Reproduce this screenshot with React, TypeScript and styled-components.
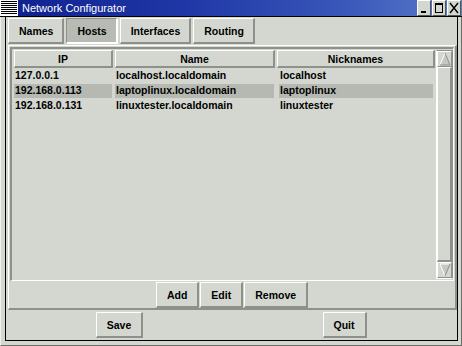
import React from "react";
import styled, { createGlobalStyle } from "styled-components";

const hosts = [
  { ip: "127.0.0.1", name: "localhost.localdomain", nick: "localhost" },
  { ip: "192.168.0.113", name: "laptoplinux.localdomain", nick: "laptoplinux", selected: true },
  { ip: "192.168.0.131", name: "linuxtester.localdomain", nick: "linuxtester" },
];

const tabs = ["Names", "Hosts", "Interfaces", "Routing"];

export default function App() {
  return (
    <>
      <GlobalStyle />
      <Window>
        <TitleBar>
          <MenuIcon width="18" height="16" viewBox="0 0 18 16">
            <rect x="0" y="0" width="18" height="16" fill="#fff" />
            {[1, 3, 5, 7, 9, 11, 13].map((y) => (
              <rect key={y} x="1" y={y} width="16" height="1" fill="#000" />
            ))}
          </MenuIcon>
          <Title>Network Configurator</Title>
          <WinButtons>
            <WinButton>
              <svg width="12" height="14" viewBox="0 0 12 14">
                <rect x="3" y="10" width="5" height="2" fill="#000" />
              </svg>
            </WinButton>
            <WinButton>
              <svg width="12" height="14" viewBox="0 0 12 14">
                <rect x="2.5" y="2.5" width="7" height="9" fill="none" stroke="#000" />
                <rect x="2" y="2" width="8" height="2" fill="#000" />
              </svg>
            </WinButton>
            <WinButton>
              <svg width="12" height="14" viewBox="0 0 12 14">
                <path d="M2 2 L10 12 M10 2 L2 12" stroke="#000" strokeWidth="1.4" />
              </svg>
            </WinButton>
          </WinButtons>
        </TitleBar>

        <Frame>
          <Client>
            <Tabs>
              {tabs.map((t) => (
                <Tab key={t} $active={t === "Hosts"}>{t}</Tab>
              ))}
            </Tabs>

            <Panel>
              <List>
                <Table>
                  <Header>
                    <HeaderCell>IP</HeaderCell>
                    <HeaderCell>Name</HeaderCell>
                    <HeaderCell>Nicknames</HeaderCell>
                  </Header>
                  {hosts.map((h) => (
                    <Row key={h.ip}>
                      <Cell $selected={h.selected}>{h.ip}</Cell>
                      <Cell $selected={h.selected}>{h.name}</Cell>
                      <Cell $selected={h.selected} $last>{h.nick}</Cell>
                    </Row>
                  ))}
                </Table>
                <Scrollbar>
                  <Arrow>
                    <svg width="12" height="14" viewBox="0 0 12 14">
                      <path d="M6 1 L11 13 L1 13 Z" fill="#c4c8c1" />
                      <path d="M6 1 L1 13" stroke="#fff" strokeWidth="1" />
                      <path d="M6 1 L11 13 L1 13" fill="none" stroke="#8e918b" strokeWidth="1" />
                    </svg>
                  </Arrow>
                  <Thumb />
                  <Arrow>
                    <svg width="12" height="14" viewBox="0 0 12 14">
                      <path d="M1 1 L11 1 L6 13 Z" fill="#c4c8c1" />
                      <path d="M1 1 L11 1 M1 1 L6 13" stroke="#fff" strokeWidth="1" />
                      <path d="M11 1 L6 13" stroke="#8e918b" strokeWidth="1" />
                    </svg>
                  </Arrow>
                </Scrollbar>
              </List>

              <Actions>
                <Button>Add</Button>
                <Button>Edit</Button>
                <Button>Remove</Button>
              </Actions>
            </Panel>

            <BottomBar>
              <Button>Save</Button>
              <Button>Quit</Button>
            </BottomBar>
          </Client>
        </Frame>
      </Window>
    </>
  );
}

const GlobalStyle = createGlobalStyle`
  html, body {
    margin: 0;
    padding: 0;
    background: #d4d7d0;
  }
  body {
    font-family: "Liberation Sans", Arial, sans-serif;
  }
  * {
    box-sizing: border-box;
  }
`;

const Window = styled.div`
  width: 462px;
  height: 346px;
  display: flex;
  flex-direction: column;
  background: #d4d7d0;
  overflow: hidden;
`;

const TitleBar = styled.div`
  height: 17px;
  flex: 0 0 17px;
  display: flex;
  align-items: flex-start;
  background: linear-gradient(90deg, #10208e 0%, #1f37a6 40%, #3a58ba 75%, #5a7bca 100%);
  border-bottom: 1px solid #000;
`;

const MenuIcon = styled.svg`
  display: block;
  flex: 0 0 18px;
`;

const Title = styled.div`
  flex: 1;
  color: #fff;
  font-size: 11px;
  line-height: 16px;
  margin-left: 4px;
  white-space: nowrap;
`;

const WinButtons = styled.div`
  display: flex;
  gap: 1px;
  margin-right: 1px;
`;

const WinButton = styled.div`
  width: 14px;
  height: 16px;
  display: flex;
  align-items: center;
  justify-content: center;
  background: #d4d7d0;
  border-top: 1px solid #fff;
  border-left: 1px solid #fff;
  border-right: 1px solid #55574f;
  border-bottom: 1px solid #55574f;
`;

const Frame = styled.div`
  flex: 1;
  display: flex;
  border-left: 1px solid #eef0ec;
  border-right: 1px solid #6c6e6a;
  border-bottom: 1px solid #6c6e6a;
  padding: 0 3px 4px 4px;
`;

const Client = styled.div`
  flex: 1;
  display: flex;
  flex-direction: column;
  border: 1px solid #000;
  border-top: none;
  padding-left: 1px;
`;

const Tabs = styled.div`
  flex: 0 0 28px;
  display: flex;
  gap: 2px;
  padding: 1px 0 1px 1px;
`;

const Tab = styled.div<{ $active?: boolean }>`
  display: flex;
  align-items: center;
  padding: 0 9px 0 10px;
  font-size: 10.5px;
  font-weight: bold;
  color: #000;
  background: ${(p) => (p.$active ? "#b7bbb4" : "#d4d7d0")};
  border-top: 1px solid ${(p) => (p.$active ? "#8e918b" : "#fff")};
  border-left: 1px solid ${(p) => (p.$active ? "#8e918b" : "#fff")};
  border-right: 2px solid ${(p) => (p.$active ? "#fff" : "#8e918b")};
  border-bottom: 2px solid ${(p) => (p.$active ? "#fff" : "#8e918b")};
`;

const Panel = styled.div`
  flex: 1;
  display: flex;
  flex-direction: column;
  margin-left: 1px;
  padding: 1px 1px 0 1px;
  border-top: 1px solid #fff;
  border-left: 1px solid #fff;
  border-right: 2px solid #8e918b;
  border-bottom: 2px solid #8e918b;
`;

const List = styled.div`
  flex: 1;
  display: flex;
  padding: 1px 0 1px 2px;
  border-top: 2px solid #8e918b;
  border-left: 2px solid #8e918b;
  border-right: 1px solid #fff;
  border-bottom: 1px solid #fff;
`;

const Table = styled.div`
  flex: 1;
  display: flex;
  flex-direction: column;
  gap: 1px;
`;

const Header = styled.div`
  display: grid;
  grid-template-columns: 99px 160px 1fr;
  gap: 2px;
  height: 18px;
`;

const HeaderCell = styled.div`
  display: flex;
  align-items: center;
  justify-content: center;
  font-size: 10.5px;
  font-weight: bold;
  border-top: 1px solid #fff;
  border-left: 1px solid #fff;
  border-right: 2px solid #8e918b;
  border-bottom: 2px solid #8e918b;
`;

const Row = styled.div`
  display: grid;
  grid-template-columns: 99px 160px 1fr;
  gap: 2px;
  height: 14px;
`;

const Cell = styled.div<{ $selected?: boolean; $last?: boolean }>`
  margin: ${(p) => (p.$last ? "0 2px 0 2px" : "0 1px 0 0")};
  padding-left: 1px;
  font-size: 10.5px;
  font-weight: bold;
  line-height: 13px;
  white-space: nowrap;
  overflow: hidden;
  background: ${(p) => (p.$selected ? "#b5b9b2" : "transparent")};
`;

const Scrollbar = styled.div`
  flex: 0 0 17px;
  margin-left: 1px;
  display: flex;
  flex-direction: column;
  border-top: 1px solid #8e918b;
  border-left: 1px solid #fff;
  border-right: 1px solid #8e918b;
  border-bottom: 1px solid #fff;
  background: #c4c8c1;
`;

const Arrow = styled.div`
  flex: 0 0 16px;
  display: flex;
  align-items: center;
  justify-content: center;
  background: #d4d7d0;
  border-top: 1px solid #fff;
  border-left: 1px solid #fff;
  border-right: 1px solid #8e918b;
  border-bottom: 1px solid #8e918b;
`;

const Thumb = styled.div`
  flex: 1;
  background: #d4d7d0;
  border-top: 1px solid #fff;
  border-left: 1px solid #fff;
  border-right: 2px solid #8e918b;
  border-bottom: 2px solid #8e918b;
`;

const Actions = styled.div`
  flex: 0 0 27px;
  display: flex;
  justify-content: center;
  gap: 1px;
  padding-top: 1px;
`;

const Button = styled.button`
  height: 26px;
  padding: 0 10px;
  font-family: "Liberation Sans", Arial, sans-serif;
  font-size: 10.5px;
  font-weight: bold;
  color: #000;
  background: #d4d7d0;
  border-top: 1px solid #fff;
  border-left: 1px solid #fff;
  border-right: 2px solid #8e918b;
  border-bottom: 2px solid #8e918b;
  border-radius: 0;
  cursor: pointer;
`;

const BottomBar = styled.div`
  flex: 0 0 30px;
  display: grid;
  grid-template-columns: 1fr 1fr;
  justify-items: center;
  align-items: start;
  padding-top: 2px;
`;
